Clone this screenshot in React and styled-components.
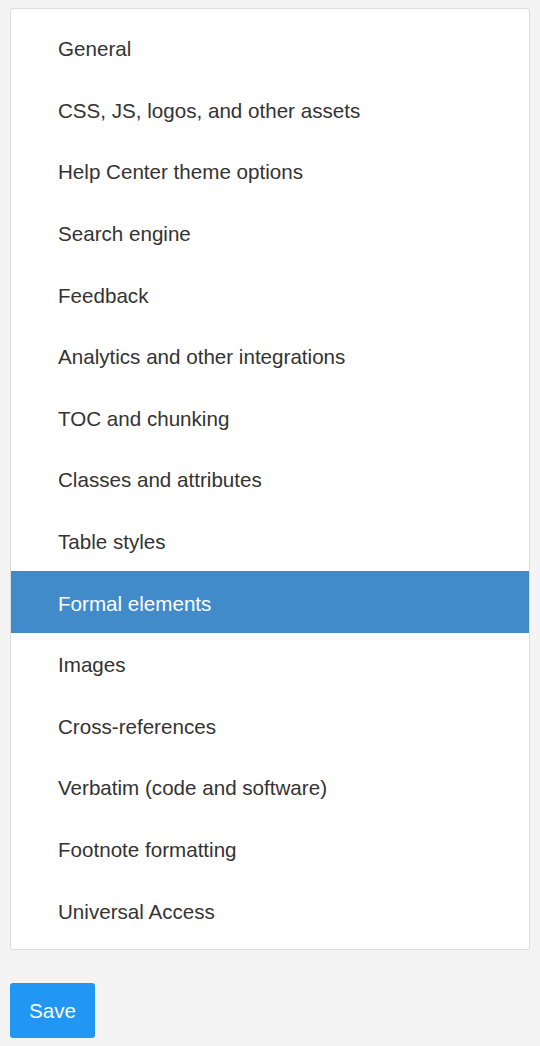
import styled, { createGlobalStyle } from "styled-components";

const GlobalStyle = createGlobalStyle`
  html, body {
    margin: 0;
    padding: 0;
    background: #f4f4f4;
  }
  body {
    font-family: "Liberation Sans", Arial, Helvetica, sans-serif;
    color: #333;
  }
`;

const Page = styled.div`
  padding: 8px 10px;
`;

const MenuPanel = styled.ul`
  list-style: none;
  margin: 0;
  padding: 8px 0;
  background: #fff;
  border: 1px solid #dcdcdc;
  border-radius: 3px;
`;

const MenuItem = styled.li`
  box-sizing: border-box;
  height: 61.6px;
  display: flex;
  align-items: center;
  padding: 3px 0 0 47px;
  font-size: 20.6px;
  color: ${(p) => (p.$active ? "#fff" : "#333")};
  background: ${(p) => (p.$active ? "#418bca" : "transparent")};
  cursor: pointer;
`;

const SaveButton = styled.button`
  margin-top: 33px;
  height: 55px;
  padding: 2px 19px 0;
  border: none;
  border-radius: 3px;
  background: #2196f3;
  color: #fff;
  font-family: "Liberation Sans", Arial, sans-serif;
  font-size: 20.6px;
  cursor: pointer;
`;

const items = [
  "General",
  "CSS, JS, logos, and other assets",
  "Help Center theme options",
  "Search engine",
  "Feedback",
  "Analytics and other integrations",
  "TOC and chunking",
  "Classes and attributes",
  "Table styles",
  "Formal elements",
  "Images",
  "Cross-references",
  "Verbatim (code and software)",
  "Footnote formatting",
  "Universal Access",
];

const App = () => {
  return (
    <>
      <GlobalStyle />
      <Page>
        <MenuPanel>
          {items.map((label) => (
            <MenuItem key={label} $active={label === "Formal elements"}>
              {label}
            </MenuItem>
          ))}
        </MenuPanel>
        <SaveButton>Save</SaveButton>
      </Page>
    </>
  );
};

export default App;
